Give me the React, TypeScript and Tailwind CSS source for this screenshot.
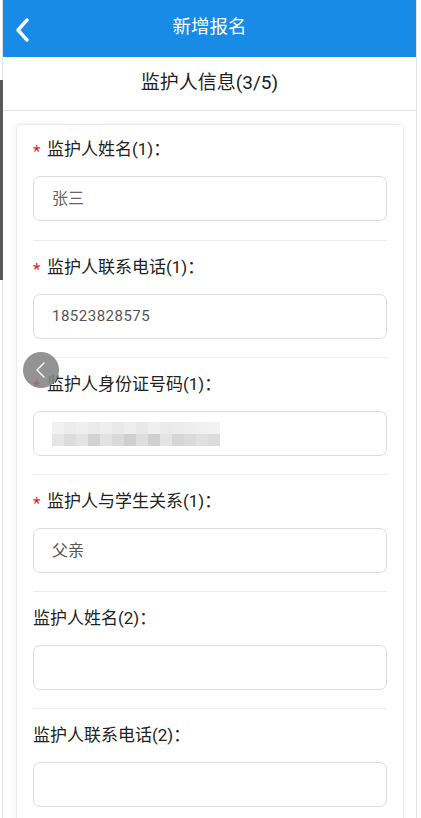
import type { ReactNode } from "react"

const idBlocksTop = ["#f1f1f1", "#ececec", "#efefef", "#eaeaea", "#eeeeee", "#e9e9e9", "#ededed", "#e8e8e8", "#efefef", "#eaeaea", "#ececec", "#eeeeee", "#f0f0f0", "#f2f2f2"]
const idBlocksBottom = ["#e6e6e6", "#dcdcdc", "#e4e4e4", "#d2d2d2", "#e2e2e2", "#dadada", "#cfcfcf", "#dedede", "#d0d0d0", "#e4e4e4", "#d6d6d6", "#dadada", "#e0e0e0", "#dcdcdc"]

function Field({
  label,
  required,
  first,
  last,
  children,
}: {
  label: string
  required?: boolean
  first?: boolean
  last?: boolean
  children?: ReactNode
}) {
  return (
    <div className={`${first ? "pt-[13px] pb-[19px]" : "pt-[15px] pb-[18px]"} ${last ? "" : "border-b border-[#ececec]"}`}>
      <div className="flex items-center h-6 text-[17px] text-[#222]">
        {required && <span className="w-[14px] text-[17px] text-[#e3191c] leading-none pt-[3px]">*</span>}
        <span>{label}</span>
      </div>
      <div className="mt-[14px] h-[45px] rounded-[7px] border border-[#dcdcdc] bg-white flex items-center pl-[18px] overflow-hidden">
        {children}
      </div>
    </div>
  )
}

export default function App() {
  return (
    <div
      className="relative min-h-screen bg-white"
      style={{ fontFamily: '"Roboto", "Noto Sans CJK SC", sans-serif' }}
    >
      {/* left edge strip */}
      <div className="absolute left-0 top-[80px] h-[200px] w-[3px] bg-[#5a5a5a]" />

      <div className="ml-[2px] w-[415px] min-h-[818px] border-x border-[#e3e3e3]">
        {/* Header */}
        <header className="relative h-[57px] bg-[#178be6] flex items-center justify-center">
          <button className="absolute left-[11px] top-[17px] p-0" aria-label="back">
            <svg width="18" height="26" viewBox="0 0 18 26" fill="none">
              <polyline points="13,3 4,13 13,23" stroke="white" strokeWidth="3.4" strokeLinecap="round" strokeLinejoin="round" />
            </svg>
          </button>
          <h1 className="text-[18.5px] text-white -mt-[2px]">新增报名</h1>
        </header>

        {/* Section title */}
        <div className="h-[54px] border-b border-[#e4e4e4] flex items-center justify-center">
          <h2 className="text-[19px] text-[#222]">监护人信息(3/5)</h2>
        </div>

        {/* Card */}
        <div className="ml-[13px] mr-[12px] mt-[13px] rounded-[4px] border border-[#ececec] shadow-[0_0_6px_rgba(0,0,0,0.06)] px-4">
          <Field label="监护人姓名(1)：" required first>
            <span className="text-[16px] text-[#666]">张三</span>
          </Field>
          <Field label="监护人联系电话(1)：" required>
            <span className="text-[15px] text-[#555] tracking-[0.5px]">18523828575</span>
          </Field>
          <Field label="监护人身份证号码(1)：" required>
            <div className="flex flex-col blur-[0.6px]">
              <div className="flex">
                {idBlocksTop.map((c, i) => (
                  <div key={i} className="w-3 h-3" style={{ backgroundColor: c }} />
                ))}
              </div>
              <div className="flex">
                {idBlocksBottom.map((c, i) => (
                  <div key={i} className="w-3 h-3" style={{ backgroundColor: c }} />
                ))}
              </div>
            </div>
          </Field>
          <Field label="监护人与学生关系(1)：" required>
            <span className="text-[16px] text-[#555]">父亲</span>
          </Field>
          <Field label="监护人姓名(2)：" />
          <Field label="监护人联系电话(2)：" last />
        </div>
      </div>

      {/* floating back bubble */}
      <div className="absolute left-[23px] top-[352px] w-9 h-9 rounded-full bg-[rgba(128,128,128,0.85)] flex items-center justify-center">
        <svg width="14" height="18" viewBox="0 0 14 18" fill="none">
          <polyline points="10,2 3,9 10,16" stroke="white" strokeWidth="1.4" strokeLinecap="round" strokeLinejoin="round" />
        </svg>
      </div>
    </div>
  )
}
